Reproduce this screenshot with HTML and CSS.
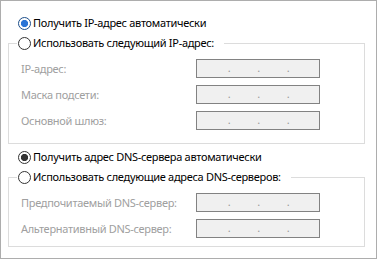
FILE: index.html
```html
<!DOCTYPE html>
<html>
<head>
	<meta name="viewport" content="width=device-width, initial-scale=1.0">
	<link rel="stylesheet" href="styles.css">
	<title>Свойства IP</title>
</head>
<body>
	<div class="frame">
		<label class="choice">
			<input type="radio" name="ip" class="blue" checked>
			<span>Получить IP-адрес автоматически</span>
		</label>

		<fieldset class="group ip-group">
			<legend>
				<label class="choice">
					<input type="radio" name="ip">
					<span>Использовать следующий IP-адрес:</span>
				</label>
			</legend>
			<div class="rows">
				<span class="name">IP-адрес:</span>
				<div class="addr"><span>.</span><span>.</span><span>.</span></div>
				<span class="name">Маска подсети:</span>
				<div class="addr"><span>.</span><span>.</span><span>.</span></div>
				<span class="name">Основной шлюз:</span>
				<div class="addr"><span>.</span><span>.</span><span>.</span></div>
			</div>
		</fieldset>

		<label class="choice dns-auto">
			<input type="radio" name="dns" checked>
			<span>Получить адрес DNS-сервера автоматически</span>
		</label>

		<fieldset class="group dns-group">
			<legend>
				<label class="choice">
					<input type="radio" name="dns">
					<span>Использовать следующие адреса DNS-серверов:</span>
				</label>
			</legend>
			<div class="rows">
				<span class="name">Предпочитаемый DNS-сервер:</span>
				<div class="addr"><span>.</span><span>.</span><span>.</span></div>
				<span class="name">Альтернативный DNS-сервер:</span>
				<div class="addr"><span>.</span><span>.</span><span>.</span></div>
			</div>
		</fieldset>
	</div>
</body>
</html>
```

FILE: styles.css
```css
* {
	margin: 0;
	padding: 0;
	box-sizing: border-box;
}
body {
	background: #fff;
	font-family: "Noto Sans", "Liberation Sans", sans-serif;
	font-size: 11px;
	letter-spacing: -0.3px;
	color: #000;
}
.frame {
	width: 377px;
	height: 259px;
	border: 1px solid #adadad;
	padding-top: 12px;
}
.choice {
	display: flex;
	align-items: center;
	height: 20px;
	line-height: 20px;
	padding-left: 17px;
	white-space: nowrap;
}
.choice input {
	appearance: none;
	-webkit-appearance: none;
	width: 13px;
	height: 13px;
	border: 1px solid #333;
	border-radius: 50%;
	background: #fff;
	margin-right: 2px;
	flex: none;
}
.choice input:checked {
	background: radial-gradient(circle, #333 0 3.3px, #fff 3.9px);
}
.choice input.blue:checked {
	border-color: #1c4e8a;
	background: radial-gradient(circle, #2a74d6 0 3.3px, #fff 3.9px);
}
.group {
	margin: 0 11px 0 7px;
	border: 1px solid #dcdcdc;
	min-width: 0;
}
.group legend {
	margin-left: 8px;
	padding: 0 10px 0 1px;
}
.group legend .choice {
	padding-left: 0;
}
.rows {
	display: grid;
	grid-template-columns: 175px 124px;
	grid-auto-rows: 19px;
	row-gap: 7px;
	align-items: center;
	margin-top: 6px;
	padding-left: 12px;
}
.ip-group {
	padding-bottom: 13px;
}
.dns-group {
	padding-bottom: 8px;
}
.dns-auto {
	margin-top: 3px;
}
.name {
	color: #a0a0a0;
	white-space: nowrap;
}
.addr {
	height: 19px;
	border: 1px solid #828282;
	background: #f0f0f0;
	display: flex;
	gap: 25.5px;
	padding-left: 30px;
	line-height: 15px;
	color: #9a9a9a;
}
.addr span {
	width: 4px;
	text-align: center;
}
```
